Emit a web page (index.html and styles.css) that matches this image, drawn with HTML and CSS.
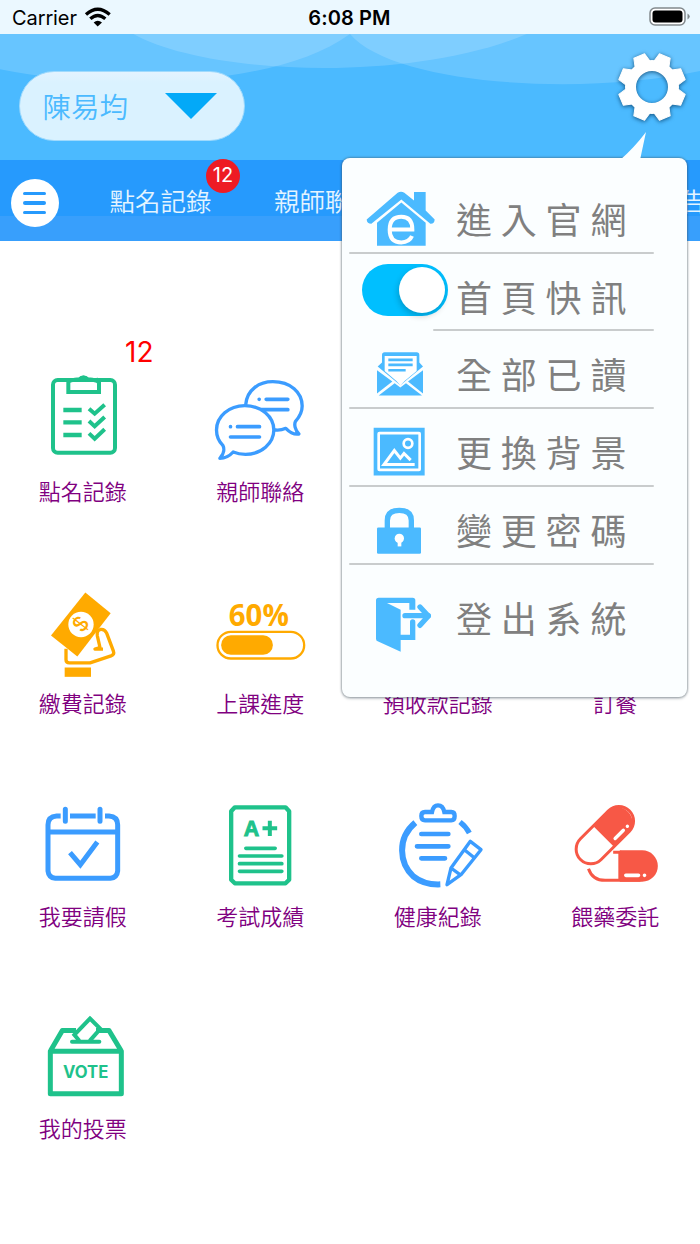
FILE: index.html
```html
<!DOCTYPE html>
<html lang="zh-Hant">
<head>
<meta charset="utf-8">
<title>首頁</title>
<link rel="stylesheet" href="styles.css">
</head>
<body>
<div class="status">
  <span class="carrier">Carrier
    <svg class="wifi" viewBox="250 18 84 62"><g fill="none" stroke="#000" stroke-width="10"><path d="M256 43Q291 12 327 43"/><path d="M269 56Q291 36 314 56"/></g><path d="M279 67Q291 57 304 67L291 79Z"/></svg>
  </span>
  <span class="time">6:08 PM</span>
  <svg class="battery" viewBox="0 0 42 20"><rect x="1" y="1" width="35" height="17" rx="5" fill="#fff" stroke="#82898d" stroke-width="1.5"/><rect x="3.5" y="3.5" width="30" height="12" rx="3"/><path d="M38.5 6.5Q43 9.500 38.500 12.500Z" fill="#82898d"/></svg>
</div>
<header class="top">
  <svg class="waves" viewBox="0 102 2100 378" fill="#fff" fill-opacity=".16"><path d="M0 102V208C300 268 820 270 1050 102Z"/><path d="M400 102C620 225 1230 250 1580 102Z"/><path d="M1050 102C1180 255 1740 290 2100 213V102Z"/></svg>
  <div class="student"><span>陳易均</span><i class="caret"></i></div>
  <svg class="gear" viewBox="-42 -42 84 84">
    <defs><path id="tooth" d="M-8.500-23L-5.800-33.500H5.800L8.500-23Z" stroke="#fff" stroke-linejoin="round"/></defs>
    <g fill="#fff"><circle r="21.500" fill="none" stroke="#fff" stroke-width="11"/>
    <use href="#tooth" transform="rotate(22.500)"/><use href="#tooth" transform="rotate(67.500)"/><use href="#tooth" transform="rotate(112.500)"/><use href="#tooth" transform="rotate(157.500)"/><use href="#tooth" transform="rotate(202.500)"/><use href="#tooth" transform="rotate(247.500)"/><use href="#tooth" transform="rotate(292.500)"/><use href="#tooth" transform="rotate(337.500)"/></g>
  </svg>
</header>
<nav class="tabs">
  <div class="burger"><i></i><i></i><i></i></div>
  <span class="tab">點名記錄<b class="badge">12</b></span>
  <span class="tab">親師聯</span>
  <span class="tab last">告</span>
</nav>
<main class="grid">
  <div class="cell"><b class="count">12</b>
    <svg class="icon" viewBox="39 108 300 300" fill="none" stroke="#1fc28b" stroke-width="12"><rect x="99" y="150" width="186" height="218" rx="14"/><path d="M145 150V186H237V150Q232 148 228 150M145 156Q150 150 178 148Q190 138 204 148Q232 150 237 158" stroke-width="12"/><path d="M180 150Q190 135 202 150" stroke-width="12"/><path d="M130 240H185M130 277H185M130 315H185" stroke-width="13"/><path d="M207 236L224 251L254 224M207 273L224 289L254 261M207 310L224 326L254 298" stroke-width="12"/></svg>
    <span class="label">點名記錄</span></div>
  <div class="cell">
    <svg class="icon" viewBox="571.500 108 300 300" fill="none" stroke="#3b9cff" stroke-width="10" stroke-linecap="round" stroke-linejoin="round"><path d="M676 222C680 180 715 155 757 155C810 155 845 187 845 228C845 250 835 263 825 274C820 284 824 300 835 312Q815 315 796 295Q780 302 764 300"/><path d="M737 208H802M716 208h.1M724 239H802" stroke-width="11"/><path d="M598 385C611 372 612 356 607 346C594 333 588 316 588 300C588 260 625 227 673 227C722 227 760 260 760 300C760 340 722 373 675 373Q655 373 638 366Q621 385 598 385Z"/><path d="M651 290H717M630 290h.1M630 321H717" stroke-width="11"/></svg>
    <span class="label">親師聯絡</span></div>
  <div class="cell"></div>
  <div class="cell"></div>

  <div class="cell">
    <svg class="icon" viewBox="39 -4.500 300 300" fill="none" stroke="#ffaa00" stroke-width="10"><path d="M138 205V238Q138 247 148 247H210L273 226Q284 222 280 211L260 158Q254 145 241 147Q229 151 232 166L240 201L225 206H249" stroke-linejoin="round"/><path d="M196 36L272 98L172 228L93 165Z" fill="#ffaa00" stroke="none"/><circle cx="183" cy="132" r="38" fill="#fff" stroke="none"/><text class="dollar" transform="translate(183 132) rotate(-52)" text-anchor="middle" y="20">$</text><path d="M134 261H213V289H134Z" fill="#ffaa00" stroke="none"/></svg>
    <span class="label">繳費記錄</span></div>
  <div class="cell">
    <svg class="icon" viewBox="571.500 -4.500 300 300" fill="none" stroke="#ffaa00"><text class="percent" x="715" y="136" text-anchor="middle" textLength="180" lengthAdjust="spacingAndGlyphs">60%</text><rect x="591" y="154" width="260" height="80" rx="40" stroke-width="7"/><rect x="602" y="164" width="155" height="59" rx="29" fill="#ffaa00" stroke="none"/></svg>
    <span class="label">上課進度</span></div>
  <div class="cell"><div class="icon"></div><span class="label">預收款記錄</span></div>
  <div class="cell"><div class="icon"></div><span class="label">訂餐</span></div>

  <div class="cell">
    <svg class="icon" viewBox="39 3 300 300" fill="none" stroke="#3b9cff" stroke-width="15"><path d="M122 78H110Q84 80 84 104V243Q86 263 106 265H271Q291 263 293 243V104Q293 80 267 78H255M150 78H227M84 126H293"/><path d="M136 58V94M240 58V94" stroke-linecap="round"/><path d="M150 188L181 224L232 156"/></svg>
    <span class="label">我要請假</span></div>
  <div class="cell">
    <svg class="icon" viewBox="571.500 3 300 300" fill="none" stroke="#1fc28b" stroke-width="13"><path d="M643 52H795L806 64V269L795 280H643L632 269V64Z" stroke-linejoin="round"/><path d="M676 175H764M657 198H784M657 221H784M657 244H784" stroke-width="11" stroke-linecap="round"/><text class="grade" x="670" y="137">A</text><path d="M726 115H770M748 92V138" stroke-width="12"/></svg>
    <span class="label">考試成績</span></div>
  <div class="cell">
    <svg class="icon" viewBox="54 3 300 300" fill="none" stroke="#3b9cff" stroke-width="14"><path d="M136 98C80 145 88 220 130 259Q162 285 211 283" stroke-width="18"/><path d="M270 96Q288 110 298 129" stroke-width="16"/><path d="M165 66H186Q190 46 204 46Q219 46 223 66H244Q254 66 254 78Q254 91 244 91H165Q154 91 154 78Q154 66 165 66Z" stroke-width="13"/><path d="M154 132H235M141 169H235M154 205H225" stroke-linecap="round" stroke-width="14"/><path d="M301 154L333 179L273 254L231 284L243 234ZM283 179L311 202M243 234L270 254" stroke-width="10" stroke-linejoin="round"/></svg>
    <span class="label">健康紀錄</span></div>
  <div class="cell">
    <svg class="icon" viewBox="586.500 3 300 300" fill="none" stroke="#f75846" stroke-width="9"><g transform="rotate(-45 702 135)"><rect x="599" y="92" width="207" height="88" rx="44"/><path d="M697 90H762A46 46 0 0 1 762 181H697Z" fill="#f75846" stroke="none"/><path d="M717 165H752M769 165h.1" stroke="#fff" stroke-width="10" stroke-linecap="round"/></g><path d="M728 187H748V267M654 236C662 260 682 271 704 271H810"/><path d="M748 181H815A47 47 0 0 1 815 275H748Z" fill="#f75846" stroke="none"/><path d="M766 256H804M822 256h.1" stroke="#fff" stroke-width="11" stroke-linecap="round"/></svg>
    <span class="label">餵藥委託</span></div>

  <div class="cell">
    <svg class="icon" viewBox="39 10.500 300 300" fill="none" stroke="#1fc28b" stroke-width="15"><path d="M91 152H304V280H91ZM92 150L127 90H168M228 90H267L303 150" stroke-linejoin="round"/><path d="M156 124H238" stroke-linecap="round" stroke-width="12"/><path d="M178 121L163 103L210 54L241 85L209 121" stroke-width="12"/><text class="vote" x="197" y="231" text-anchor="middle" textLength="136" lengthAdjust="spacingAndGlyphs">VOTE</text></svg>
    <span class="label">我的投票</span></div>
</main>

<aside class="menu">
  <svg class="tail" viewBox="0 0 28 29"><path d="M0 29Q14 17 26 1L20 29Z" fill="#fbfeff"/></svg>
  <div class="row">
    <svg class="glyph" viewBox="30 75.750 300 227.250"><path d="M80 206L173 126Q183 120 193 126L222 149V124H257V179L284 206Q283 220 271 219L184 146L94 219Q81 219 80 206Z" fill="#4bbaff"/><path d="M184 155L257 216V285H111V216Z" fill="#4bbaff"/><path d="M149 236H217Q217 198 184 198Q149 198 149 237Q149 275 184 275Q208 275 216 256" fill="none" stroke="#fff" stroke-width="12"/></svg>
    <span class="item">進入官網</span></div>
  <div class="line"></div>
  <div class="row"><div class="slot"><div class="toggle"><i></i></div></div><span class="item">首頁快訊</span></div>
  <div class="line short"></div>
  <div class="row">
    <svg class="glyph" viewBox="30 542.250 300 227.250" fill="#4bbaff"><path d="M126 614Q126 606 134 606H230Q238 606 238 614V637L249 649L181 705L113 649L126 637Z"/><path d="M134 617H230V662L193 693L181 706L170 693L134 662Z" fill="#fff"/><path d="M145 629H218M145 644H218M145 660H197" stroke="#4bbaff" stroke-width="8"/><path d="M111 660L157 694L111 730ZM249 660L204 694L249 730ZM116 736L164 699L181 712L198 699L246 736Z"/></svg>
    <span class="item">全部已讀</span></div>
  <div class="line"></div>
  <div class="row">
    <svg class="glyph" viewBox="30 -34.500 300 227.250"><path d="M101 22H254V165H101Z" fill="#4bbaff"/><g fill="none" stroke="#fff" stroke-width="8"><rect x="116" y="38" width="123" height="110" rx="2"/><circle cx="204" cy="69" r="13"/><path d="M224 132H132L163 90L181 113L192 99L212 119" stroke-width="9"/></g></svg>
    <span class="item">更換背景</span></div>
  <div class="line"></div>
  <div class="row">
    <svg class="glyph" viewBox="30 198.750 300 227.250"><path d="M142 324V299Q142 269 178 269Q214 269 214 299V324" fill="none" stroke="#4bbaff" stroke-width="16"/><rect x="111" y="320" width="132" height="79" rx="4" fill="#4bbaff"/><circle cx="178" cy="353" r="14" fill="#fff"/><path d="M173 356H184V377H173Z" fill="#fff"/></svg>
    <span class="item">變更密碼</span></div>
  <div class="line"></div>
  <div class="row tall">
    <svg class="glyph" viewBox="30 432 300 330"><path d="M108 538Q108 530 116 530H218Q226 530 226 538V566H208V546H141L182 566V692L113 661Q108 659 108 653Z" fill="#4bbaff"/><path d="M182 649H218V603M195 584H265" fill="none" stroke="#4bbaff" stroke-width="16" stroke-linecap="round"/><path d="M240 558L265 585L240 613" fill="none" stroke="#4bbaff" stroke-width="16" stroke-linecap="round" stroke-linejoin="round"/></svg>
    <span class="item">登出系統</span></div>
</aside>
</body>
</html>
```
FILE: styles.css
```css
* { box-sizing: border-box; }
body {
  margin: 0;
  width: 700px;
  height: 1244px;
  overflow: hidden;
  position: relative;
  background: #fff;
  font-family: Inter, "Noto Sans CJK TC", sans-serif;
}
svg { display: block; flex: none; }
i { display: block; }

.status {
  height: 34px;
  padding: 0 9px 0 12px;
  display: grid;
  grid-template-columns: 1fr auto 1fr;
  align-items: center;
  background: #ebf8ff;
  color: #000;
  font-size: 20px;
}
.carrier { display: flex; align-items: center; gap: 7px; letter-spacing: -.1px; padding-top: 2px; }
.wifi { width: 28px; height: 21px; margin-top: -3px; }
.time { font-weight: 600; letter-spacing: .1px; padding: 2px 4px 0 0; }
.battery { width: 42px; height: 20px; justify-self: end; }

.top {
  height: 126px;
  position: relative;
  display: flex;
  justify-content: space-between;
  padding: 37px 5.700px 0 19px;
  background: #4bbaff;
}
.waves { position: absolute; left: 0; top: 0; width: 700px; height: 126px; }
.student {
  position: relative;
  width: 226px;
  height: 70px;
  padding: 0 27px 0 22.500px;
  display: flex;
  align-items: center;
  justify-content: space-between;
  border: 1px solid #9fdafd;
  border-radius: 35px;
  background: linear-gradient(#e3f3ff, #daf2ff 16%);
  color: #4bbaff;
  font-size: 28.5px;
  font-weight: 350;
}
.student span { padding-bottom: 2px; }
.caret {
  border: 26px solid transparent;
  border-top-color: #03a9f8;
  border-bottom: 0;
}
.gear {
  position: relative;
  width: 84px;
  height: 84px;
  margin-top: -26px;
  filter: drop-shadow(0 1px 2px rgba(0, 50, 90, .75));
}

.tabs {
  height: 81px;
  position: relative;
  display: flex;
  align-items: center;
  padding-left: 10.500px;
  background: linear-gradient(#269afd 56px, #389ffc 56px);
  color: #e4f4ff;
  font-size: 25.5px;
  font-weight: 350;
}
.burger {
  width: 48px;
  height: 48px;
  margin: 5px 51px 0 0;
  display: flex;
  flex-direction: column;
  justify-content: center;
  align-items: center;
  gap: 6px;
  border-radius: 50%;
  background: #fff;
}
.burger i { width: 23px; height: 3.400px; border-radius: 2px; background: #269afd; }
.tab { position: relative; margin-right: 62.500px; padding-bottom: 3px; white-space: nowrap; }
.tab.last { margin: 0 -6px 0 auto; }
.badge {
  position: absolute;
  left: 96.500px;
  top: -22px;
  width: 34px;
  height: 34px;
  border-radius: 50%;
  background: #ee1b24;
  color: #fff;
  font-size: 20px;
  font-weight: 400;
  line-height: 33px;
  text-align: center;
}

.grid {
  width: 710px;
  margin: 0 0 0 -5.500px;
  padding-top: 125px;
  display: grid;
  grid-template-columns: repeat(4, 177.500px);
  grid-auto-rows: 212.500px;
}
.cell { position: relative; display: flex; flex-direction: column; align-items: center; gap: 12.500px; }
.icon { width: 100px; height: 100px; }
.label { margin-left: -1px; color: #800080; font-size: 22px; font-weight: 350; line-height: 26px; white-space: nowrap; }
.count {
  position: absolute;
  left: 130.500px;
  top: -31px;
  color: #f00;
  font-size: 28px;
  font-weight: 400;
  line-height: 34px;
}
.dollar { font: 500 62px Inter, sans-serif; fill: #ffaa00; stroke: none; }
.percent { font: 700 91px "Open Sans", sans-serif; fill: #ffaa00; stroke: none; }
.vote { font: 700 51px Inter, sans-serif; fill: #1fc28b; stroke: none; }
.grade { font: 700 64px "Liberation Sans", sans-serif; fill: #1fc28b; stroke: #1fc28b; stroke-width: 3px; }

.menu {
  position: absolute;
  left: 342px;
  top: 158px;
  width: 344.500px;
  height: 539px;
  padding: 17.750px 0 0 8px;
  border-radius: 8px;
  background: #fbfeff;
  box-shadow: 0 0 2px 1px rgba(60, 75, 85, .4), 0 2px 3px rgba(60, 75, 85, .2);
}
.tail { position: absolute; left: 278px; top: -27px; width: 28px; height: 29px; }
.row { height: 75.750px; display: flex; align-items: flex-start; gap: 6px; }
.row.tall { height: 110px; }
.glyph, .slot { width: 100px; height: 75.750px; flex: none; }
.tall .glyph { height: 110px; }
.slot { padding: 10.500px 0 0 12px; }
.toggle {
  width: 86px;
  height: 52px;
  padding: 3px;
  display: flex;
  justify-content: flex-end;
  border-radius: 26px;
  background: #00bfff;
}
.toggle i { width: 46px; height: 46px; border-radius: 50%; background: #fff; box-shadow: -1px 3px 6px rgba(0, 0, 0, .2); }
.item {
  padding-top: 20px;
  color: #808080;
  font-size: 36px;
  font-weight: 400;
  line-height: 50px;
  letter-spacing: 8.800px;
  white-space: nowrap;
}
.tall .item { padding-top: 30px; }
.line { width: 305px; height: 2px; margin-left: -1px; border-radius: 1px; background: #c9cccd; }
.line.short { width: 221px; margin-left: 83px; }
```
